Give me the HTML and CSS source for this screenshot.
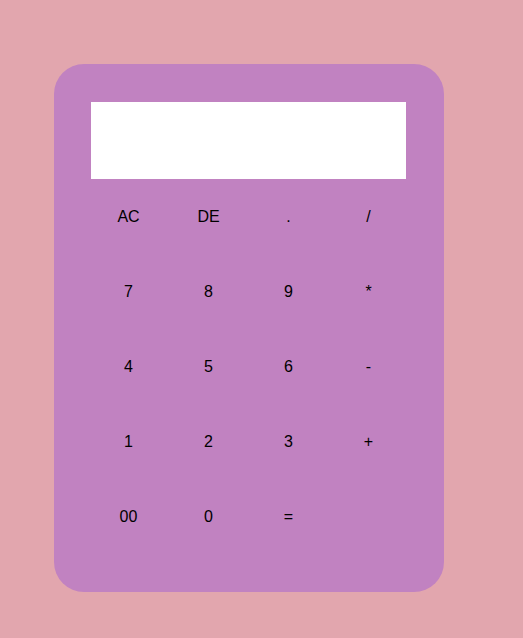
FILE: index.html
```html
<!DOCTYPE html>
<html>
<head>
<meta charset="utf-8">
<link rel="stylesheet" href="styles.css">
</head>
<body>
<div class="calc">
  <div class="display"></div>
  <div class="keys">
    <button class="key">AC</button>
    <button class="key">DE</button>
    <button class="key">.</button>
    <button class="key">/</button>
    <button class="key">7</button>
    <button class="key">8</button>
    <button class="key">9</button>
    <button class="key">*</button>
    <button class="key">4</button>
    <button class="key">5</button>
    <button class="key">6</button>
    <button class="key">-</button>
    <button class="key">1</button>
    <button class="key">2</button>
    <button class="key">3</button>
    <button class="key">+</button>
    <button class="key">00</button>
    <button class="key">0</button>
    <button class="key">=</button>
  </div>
</div>
</body>
</html>
```
FILE: styles.css
```css
html, body {
  margin: 0;
  padding: 0;
}
body {
  background: #e2a6ae;
  width: 523px;
  height: 638px;
  padding-top: 64px;
  padding-left: 54px;
  box-sizing: border-box;
  font-family: "Liberation Sans", Arial, sans-serif;
}
.calc {
  width: 390px;
  height: 528px;
  box-sizing: border-box;
  background: #c182c1;
  border-radius: 30px;
  padding: 38px 38px 38px 37px;
}
.display {
  width: 315px;
  height: 77px;
  background: #ffffff;
}
.keys {
  display: grid;
  grid-template-columns: repeat(4, 75px);
  grid-auto-rows: 75px;
  column-gap: 5px;
}
.key {
  background: transparent;
  border: none;
  padding: 0;
  margin: 0;
  font-family: "Liberation Sans", Arial, sans-serif;
  font-size: 16px;
  color: #000;
}
```
